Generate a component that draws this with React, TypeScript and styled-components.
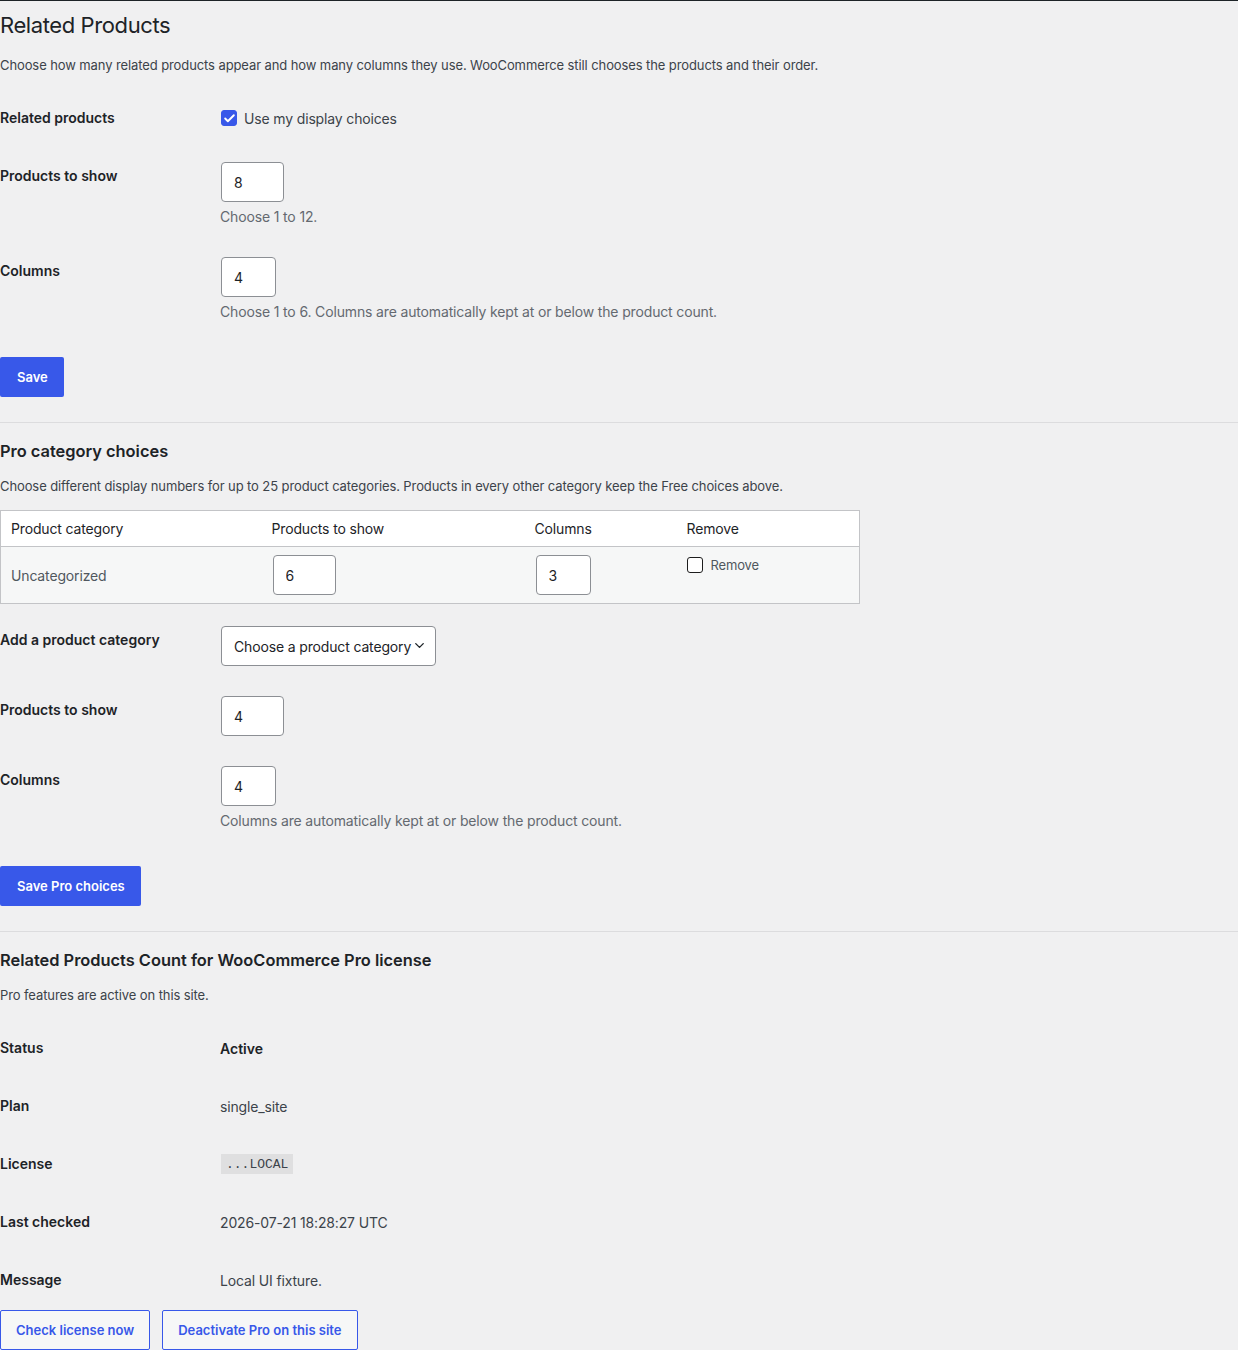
import React from 'react';
import styled, { createGlobalStyle } from 'styled-components';
import { ChevronDown, Check } from 'lucide-react';

const GlobalStyle = createGlobalStyle`
  body {
    margin: 0;
    background: #f0f0f1;
    font-family: Inter, "Noto Sans", "Liberation Sans", sans-serif;
    color: #3c434a;
    font-size: 13px;
  }
  * {
    box-sizing: border-box;
  }
`;

const App = () => {
  return (
    <Page>
      <GlobalStyle />
      <Title>Related Products</Title>
      <Intro>
        Choose how many related products appear and how many columns they use. WooCommerce still chooses the
        products and their order.
      </Intro>

      <FormRows>
        <Label>Related products</Label>
        <Field>
          <CheckLabel>
            <Box checked>
              <Check size={13} strokeWidth={3.5} color="#fff" />
            </Box>
            Use my display choices
          </CheckLabel>
        </Field>

        <Label>Products to show</Label>
        <Field>
          <NumberInput type="text" defaultValue="8" width={63} />
          <Description>Choose 1 to 12.</Description>
        </Field>

        <Label>Columns</Label>
        <Field>
          <NumberInput type="text" defaultValue="4" width={55} />
          <Description>Choose 1 to 6. Columns are automatically kept at or below the product count.</Description>
        </Field>
      </FormRows>

      <Submit>
        <PrimaryButton>Save</PrimaryButton>
      </Submit>

      <Divider />

      <SectionTitle>Pro category choices</SectionTitle>
      <SectionText>
        Choose different display numbers for up to 25 product categories. Products in every other category keep the
        Free choices above.
      </SectionText>

      <CategoryTable>
        <colgroup>
          <col style={{ width: 261 }} />
          <col style={{ width: 263 }} />
          <col style={{ width: 152 }} />
          <col />
        </colgroup>
        <thead>
          <tr>
            <HeadCell>Product category</HeadCell>
            <HeadCell>Products to show</HeadCell>
            <HeadCell>Columns</HeadCell>
            <HeadCell>Remove</HeadCell>
          </tr>
        </thead>
        <tbody>
          <tr>
            <BodyCell>Uncategorized</BodyCell>
            <BodyCell>
              <NumberInput type="text" defaultValue="6" width={63} />
            </BodyCell>
            <BodyCell>
              <NumberInput type="text" defaultValue="3" width={55} />
            </BodyCell>
            <BodyCell $top>
              <RemoveLabel>
                <Box />
                Remove
              </RemoveLabel>
            </BodyCell>
          </tr>
        </tbody>
      </CategoryTable>

      <FormRows $tall>
        <Label>Add a product category</Label>
        <Field>
          <SelectWrap>
            <Select defaultValue="">
              <option value="">Choose a product category</option>
              <option value="uncategorized">Uncategorized</option>
            </Select>
            <SelectIcon>
              <ChevronDown size={15} strokeWidth={2.2} />
            </SelectIcon>
          </SelectWrap>
        </Field>

        <Label>Products to show</Label>
        <Field>
          <NumberInput type="text" defaultValue="4" width={63} />
        </Field>

        <Label>Columns</Label>
        <Field>
          <NumberInput type="text" defaultValue="4" width={55} />
          <Description>Columns are automatically kept at or below the product count.</Description>
        </Field>
      </FormRows>

      <Submit>
        <PrimaryButton>Save Pro choices</PrimaryButton>
      </Submit>

      <Divider />

      <SectionTitle>Related Products Count for WooCommerce Pro license</SectionTitle>
      <SectionText>Pro features are active on this site.</SectionText>

      <FormRows>
        <Label>Status</Label>
        <Value $strong>Active</Value>
        <Label>Plan</Label>
        <Value>single_site</Value>
        <Label>License</Label>
        <Value>
          <Code>...LOCAL</Code>
        </Value>
        <Label>Last checked</Label>
        <Value>2026-07-21 18:28:27 UTC</Value>
        <Label>Message</Label>
        <Value>Local UI fixture.</Value>
      </FormRows>

      <ButtonBar>
        <OutlineButton>Check license now</OutlineButton>
        <OutlineButton>Deactivate Pro on this site</OutlineButton>
      </ButtonBar>
    </Page>
  );
};

const Page = styled.div`
  border-top: 1px solid #1d2327;
`;

const Title = styled.h1`
  margin: 9px 0 0;
  font-size: 22px;
  line-height: 30px;
  font-weight: 400;
  letter-spacing: -0.4px;
  color: #1d2327;
`;

const Intro = styled.p`
  margin: 15px 0 14px;
  font-size: 13px;
  line-height: 20px;
  letter-spacing: -0.1px;
`;

const FormRows = styled.div<{ $tall?: boolean }>`
  display: grid;
  grid-template-columns: 220px 1fr;
  margin-top: ${(p) => (p.$tall ? '7px' : '0')};
`;

const Label = styled.div`
  padding: 20px 0;
  font-size: 14px;
  line-height: 18px;
  font-weight: 600;
  color: #1d2327;
`;

const Field = styled.div`
  padding: 15px 0;
`;

const Value = styled.div<{ $strong?: boolean }>`
  display: flex;
  align-items: center;
  height: 58px;
  font-size: 14px;
  font-weight: ${(p) => (p.$strong ? 600 : 400)};
  letter-spacing: ${(p) => (p.$strong ? '0' : '-0.15px')};
  color: ${(p) => (p.$strong ? '#1d2327' : '#3c434a')};
`;

const CheckLabel = styled.label`
  display: inline-flex;
  align-items: center;
  gap: 7px;
  height: 28px;
  padding-left: 1px;
  font-size: 14px;
  letter-spacing: -0.15px;
  color: #3c434a;
`;

const Box = styled.span<{ checked?: boolean }>`
  display: inline-flex;
  align-items: center;
  justify-content: center;
  width: 16px;
  height: 16px;
  border-radius: 3px;
  border: 1px solid ${(p) => (p.checked ? '#3858e9' : '#1e1e1e')};
  background: ${(p) => (p.checked ? '#3858e9' : '#fff')};
`;

const NumberInput = styled.input<{ width: number }>`
  display: block;
  width: ${(p) => p.width}px;
  height: 40px;
  margin-left: 1px;
  padding: 0 12px;
  border: 1px solid #8c8f94;
  border-radius: 4px;
  background: #fff;
  font-family: inherit;
  font-size: 14px;
  color: #1d2327;
`;

const Description = styled.p`
  margin: 4px 0 0;
  font-size: 14px;
  line-height: 21px;
  letter-spacing: -0.15px;
  color: #646970;
`;

const Submit = styled.div`
  padding-top: 20px;
  margin-bottom: 25px;
`;

const PrimaryButton = styled.button`
  height: 40px;
  padding: 0 16px 0 17px;
  border: none;
  border-radius: 2px;
  background: #3858e9;
  color: #fff;
  font-family: inherit;
  font-size: 13px;
  font-weight: 600;
  cursor: pointer;
`;

const Divider = styled.hr`
  margin: 0;
  border: none;
  border-top: 1px solid #dcdcde;
`;

const SectionTitle = styled.h2`
  margin: 17px 0 0;
  font-size: 16.4px;
  line-height: 23px;
  font-weight: 600;
  color: #1d2327;
`;

const SectionText = styled.p`
  margin: 13px 0 14px;
  font-size: 13px;
  line-height: 20px;
  letter-spacing: -0.1px;
`;

const CategoryTable = styled.table`
  width: 860px;
  table-layout: fixed;
  border-collapse: collapse;
  border: 1px solid #c3c4c7;
`;

const HeadCell = styled.th`
  padding: 8px 10px;
  background: #fff;
  border-bottom: 1px solid #c3c4c7;
  text-align: left;
  font-size: 14px;
  line-height: 19px;
  font-weight: 400;
  letter-spacing: -0.15px;
  color: #1d2327;
`;

const BodyCell = styled.td<{ $top?: boolean }>`
  padding: 8px 10px;
  background: #f6f7f7;
  vertical-align: ${(p) => (p.$top ? 'top' : 'middle')};
  font-size: 14px;
  letter-spacing: -0.15px;
  color: #50575e;
`;

const RemoveLabel = styled.label`
  display: inline-flex;
  align-items: center;
  gap: 8px;
  height: 20px;
  font-size: 13px;
  color: #50575e;
`;

const SelectWrap = styled.div`
  position: relative;
  width: 215px;
  margin-left: 1px;
`;

const Select = styled.select`
  display: block;
  width: 100%;
  height: 40px;
  padding: 0 22px 0 12px;
  border: 1px solid #8c8f94;
  border-radius: 4px;
  background: #fff;
  appearance: none;
  font-family: inherit;
  font-size: 14px;
  letter-spacing: -0.15px;
  color: #1d2327;
`;

const SelectIcon = styled.span`
  position: absolute;
  right: 9px;
  top: 12px;
  display: flex;
  color: #1d2327;
  pointer-events: none;
`;

const Code = styled.code`
  margin-left: 1px;
  padding: 3px 5px 2px;
  background: rgba(0, 0, 0, 0.07);
  font-family: "Liberation Mono", "DejaVu Sans Mono", monospace;
  font-size: 13px;
  line-height: 15px;
  letter-spacing: 0;
  color: #3c434a;
`;

const ButtonBar = styled.div`
  display: flex;
  gap: 12px;
  margin-top: 1px;
`;

const OutlineButton = styled.button`
  height: 40px;
  padding: 0 15px;
  border: 1px solid #3858e9;
  border-radius: 2px;
  background: #f6f7f7;
  color: #3858e9;
  font-family: inherit;
  font-size: 13px;
  font-weight: 600;
  cursor: pointer;
`;

export default App;
